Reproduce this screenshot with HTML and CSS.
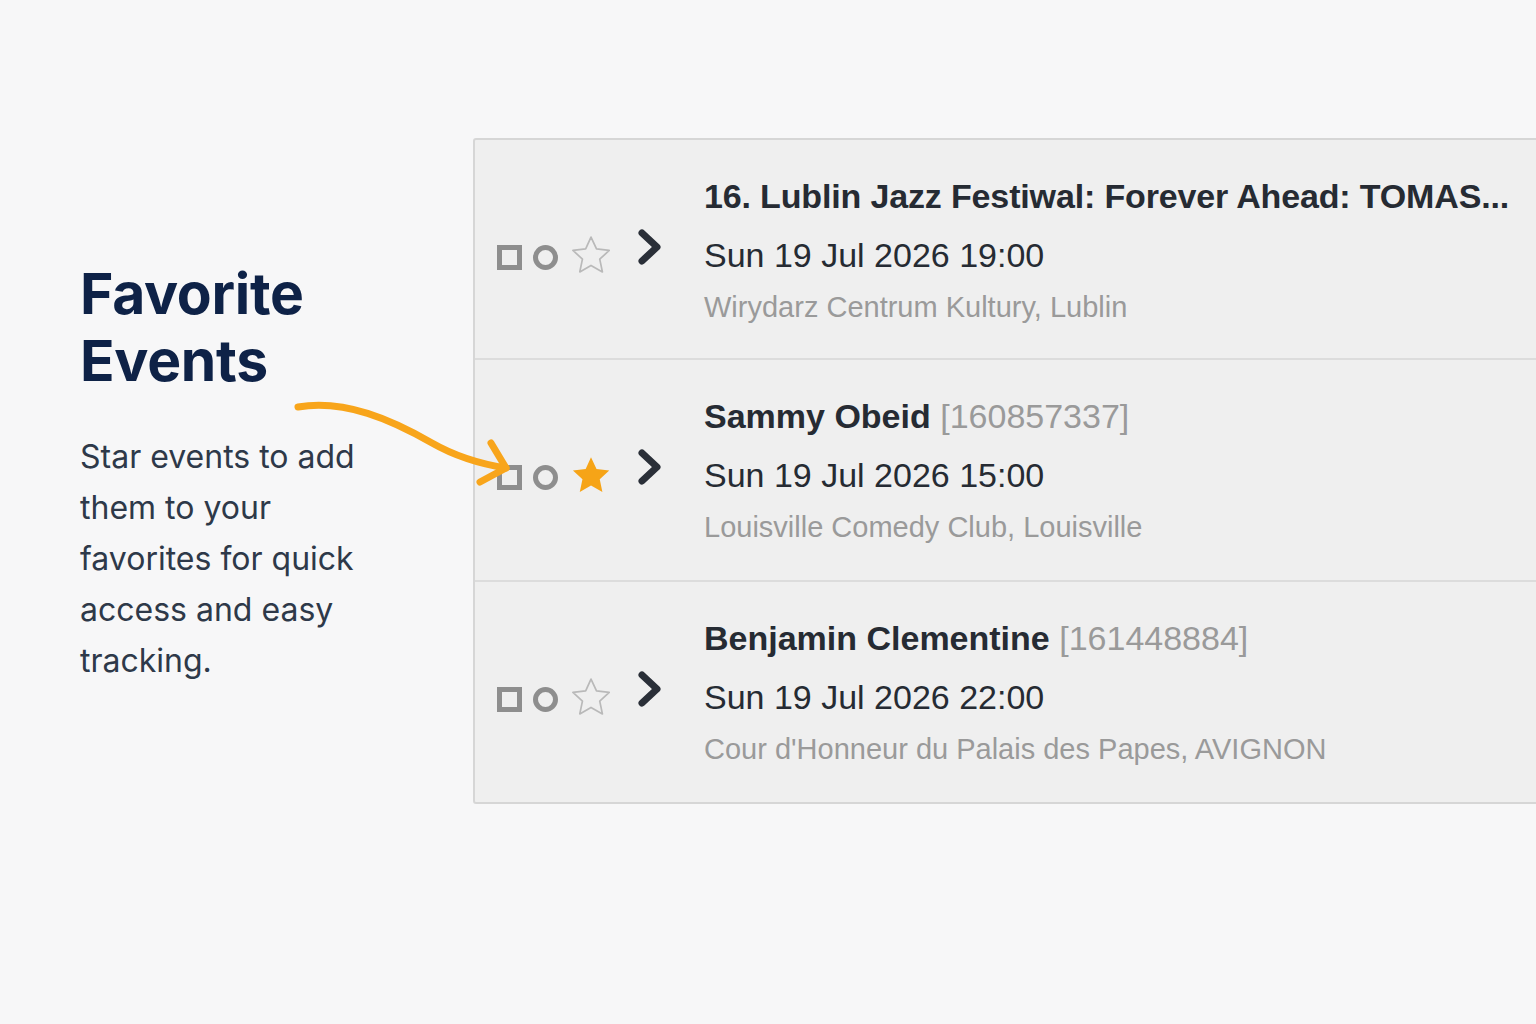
FILE: index.html
```html
<!DOCTYPE html>
<html lang="en">
<head>
  <meta charset="UTF-8">
  <meta name="viewport" content="width=device-width, initial-scale=1.0">
  <title>Favorite Events</title>
  <link rel="stylesheet" href="styles.css">
</head>
<body>
  <main class="showcase">
    <!-- Intro copy -->
    <section class="intro">
      <h1 class="intro-title">Favorite<br>Events</h1>
      <p class="intro-text">Star events to add them to your favorites for quick access and easy tracking.</p>
    </section>

    <!-- Event list -->
    <section class="event-list">
      <div class="event-row">
        <div class="event-controls">
          <svg class="ctl-square" width="25" height="25" viewBox="0 0 25 25"><rect x="2.5" y="2.5" width="20" height="20" fill="none" stroke="#8e8e8e" stroke-width="5"/></svg>
          <svg class="ctl-circle" width="25" height="25" viewBox="0 0 25 25"><circle cx="12.5" cy="12.5" r="10" fill="none" stroke="#8e8e8e" stroke-width="5"/></svg>
          <svg class="ctl-star" width="38" height="38" viewBox="2 2 20 20"><path d="M12 2.6l2.9 6.2 6.7.8-5 4.6 1.4 6.7L12 17.5l-5.9 3.4 1.4-6.7-5-4.6 6.7-.8z" fill="none" stroke="#b9b9b9" stroke-width="0.9" stroke-linejoin="round"/></svg>
          <svg class="ctl-chevron" width="24" height="38" viewBox="0 0 24 38"><path d="M4 5l15 14L4 33" fill="none" stroke="#2a2f38" stroke-width="7" stroke-linecap="round" stroke-linejoin="round"/></svg>
        </div>
        <div class="event-info">
          <div class="event-title tight">16. Lublin Jazz Festiwal: Forever Ahead: TOMAS...</div>
          <div class="event-date">Sun 19 Jul 2026 19:00</div>
          <div class="event-venue">Wirydarz Centrum Kultury, Lublin</div>
        </div>
      </div>

      <div class="event-row">
        <div class="event-controls">
          <svg class="ctl-square" width="25" height="25" viewBox="0 0 25 25"><rect x="2.5" y="2.5" width="20" height="20" fill="none" stroke="#8e8e8e" stroke-width="5"/></svg>
          <svg class="ctl-circle" width="25" height="25" viewBox="0 0 25 25"><circle cx="12.5" cy="12.5" r="10" fill="none" stroke="#8e8e8e" stroke-width="5"/></svg>
          <svg class="ctl-star" width="38" height="38" viewBox="2 2 20 20"><path d="M12 2.6l2.9 6.2 6.7.8-5 4.6 1.4 6.7L12 17.5l-5.9 3.4 1.4-6.7-5-4.6 6.7-.8z" fill="#f6a417"/></svg>
          <svg class="ctl-chevron" width="24" height="38" viewBox="0 0 24 38"><path d="M4 5l15 14L4 33" fill="none" stroke="#2a2f38" stroke-width="7" stroke-linecap="round" stroke-linejoin="round"/></svg>
        </div>
        <div class="event-info">
          <div class="event-title">Sammy Obeid <span class="event-id">[160857337]</span></div>
          <div class="event-date">Sun 19 Jul 2026 15:00</div>
          <div class="event-venue">Louisville Comedy Club, Louisville</div>
        </div>
      </div>

      <div class="event-row">
        <div class="event-controls">
          <svg class="ctl-square" width="25" height="25" viewBox="0 0 25 25"><rect x="2.5" y="2.5" width="20" height="20" fill="none" stroke="#8e8e8e" stroke-width="5"/></svg>
          <svg class="ctl-circle" width="25" height="25" viewBox="0 0 25 25"><circle cx="12.5" cy="12.5" r="10" fill="none" stroke="#8e8e8e" stroke-width="5"/></svg>
          <svg class="ctl-star" width="38" height="38" viewBox="2 2 20 20"><path d="M12 2.6l2.9 6.2 6.7.8-5 4.6 1.4 6.7L12 17.5l-5.9 3.4 1.4-6.7-5-4.6 6.7-.8z" fill="none" stroke="#b9b9b9" stroke-width="0.9" stroke-linejoin="round"/></svg>
          <svg class="ctl-chevron" width="24" height="38" viewBox="0 0 24 38"><path d="M4 5l15 14L4 33" fill="none" stroke="#2a2f38" stroke-width="7" stroke-linecap="round" stroke-linejoin="round"/></svg>
        </div>
        <div class="event-info">
          <div class="event-title">Benjamin Clementine <span class="event-id">[161448884]</span></div>
          <div class="event-date">Sun 19 Jul 2026 22:00</div>
          <div class="event-venue">Cour d'Honneur du Palais des Papes, AVIGNON</div>
        </div>
      </div>
    </section>

    <!-- Hand-drawn pointer -->
    <svg class="pointer-arrow" width="1536" height="1024" viewBox="0 0 1536 1024">
      <path d="M298 407 C 345 399, 392 420, 432 443 C 460 459, 487 465, 506 468" fill="none" stroke="#f8a51b" stroke-width="7" stroke-linecap="round"/>
      <path d="M491 443 L506 468 L480 482" fill="none" stroke="#f8a51b" stroke-width="7" stroke-linecap="round" stroke-linejoin="round"/>
    </svg>
  </main>
</body>
</html>
```

FILE: styles.css
```css
/* =====================
   Global
   ===================== */
:root {
  --page-bg: #f7f7f8;
  --panel-bg: #efefef;
  --panel-border: #d6d6d6;
  --row-divider: #dcdcdc;
  --navy: #0e2247;
  --body-text: #2e3949;
  --event-text: #262b33;
  --muted: #9a9a9a;
}

body {
  margin: 0;
  background: var(--page-bg);
  height: 1024px;
  overflow: hidden;
  font-family: Inter, "Noto Sans", sans-serif;
}

.showcase {
  position: relative;
  display: flex;
  padding-top: 138px;
  height: 886px;
}

/* =====================
   Intro
   ===================== */
.intro {
  flex: 0 0 473px;
  box-sizing: border-box;
  padding: 122px 0 0 80px;
}

.intro-title {
  margin: 0;
  font-size: 57px;
  line-height: 67px;
  font-weight: 700;
  color: var(--navy);
  letter-spacing: -0.3px;
}

.intro-text {
  margin: 37px 0 0;
  width: 290px;
  font-size: 32px;
  line-height: 51px;
  color: var(--body-text);
}

/* =====================
   Event list
   ===================== */
.event-list {
  flex: 0 0 1120px;
  align-self: flex-start;
  background: var(--panel-bg);
  border: 2px solid var(--panel-border);
  border-radius: 3px;
  font-family: "Liberation Sans", Arial, sans-serif;
}

.event-row {
  display: flex;
  height: 220px;
  border-top: 2px solid var(--row-divider);
}

.event-row:first-child {
  border-top: none;
  height: 218px;
}

.event-controls {
  display: flex;
  align-items: flex-start;
  width: 229px;
  padding-left: 22px;
  box-sizing: border-box;
}

.ctl-square,
.ctl-circle {
  margin-top: 105px;
}

.ctl-circle {
  margin-left: 11px;
}

.ctl-star {
  margin-top: 96px;
  margin-left: 14px;
}

.ctl-chevron {
  margin-top: 88px;
  margin-left: 28px;
}

.event-info {
  padding-top: 36px;
  color: var(--event-text);
  white-space: nowrap;
}

.event-title {
  font-size: 34px;
  line-height: 40px;
  font-weight: 700;
}

.event-title.tight {
  letter-spacing: -0.15px;
}

.event-id {
  font-weight: 400;
  color: var(--muted);
}

.event-date {
  margin-top: 19px;
  font-size: 34px;
  line-height: 40px;
}

.event-venue {
  margin-top: 14px;
  font-size: 29px;
  line-height: 36px;
  color: var(--muted);
}

/* =====================
   Pointer arrow
   ===================== */
.pointer-arrow {
  position: absolute;
  left: 0;
  top: 0;
  pointer-events: none;
}
```
